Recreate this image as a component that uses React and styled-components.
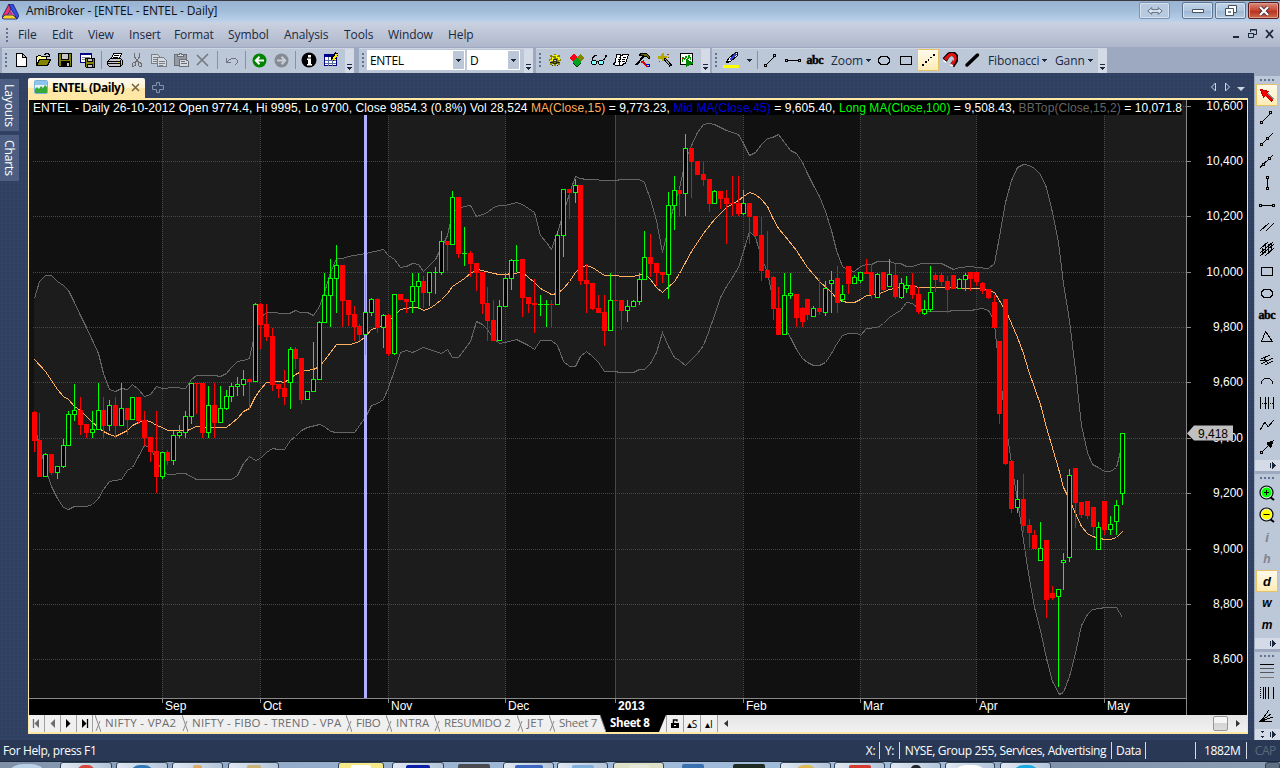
import styled, { createGlobalStyle } from 'styled-components'

const GlobalStyle = createGlobalStyle`
  * {
    box-sizing: border-box;
  }

  body {
    margin: 0;
    overflow: hidden;
    font-family: 'Open Sans', 'Noto Sans', sans-serif;
    font-size: 12px;
    color: #1b293e;
  }

  svg {
    display: block;
    flex: none;
  }
`

const Window = styled.div`
  width: 1280px;
  height: 768px;
  display: flex;
  flex-direction: column;
  overflow: hidden;
  background: #2d3e5e;
`

const TitleBar = styled.header`
  height: 22px;
  flex: none;
  display: flex;
  align-items: center;
  border-top: 1px solid #3a3a40;
  background: linear-gradient(#98b4d2, #a3bedb 50%, #bdd2ea);
  padding: 0 1px 0 2px;
  color: #101010;
`

const TitleText = styled.h1`
  flex: 1;
  margin: 0 0 2px 7px;
  font-size: 12px;
  font-weight: 400;
  letter-spacing: -0.12px;
`

const Caption = styled.button`
  width: 31px;
  height: 17px;
  margin: 0 ${(p) => p.$gap || 0}px 2px 2px;
  padding: 0;
  display: flex;
  align-items: center;
  justify-content: center;
  border: 1px solid ${(p) => (p.$close ? '#5b1d1c' : p.$pale ? '#7f93ae' : '#5f738e')};
  border-radius: 2px;
  box-shadow: inset 0 0 0 1px ${(p) => (p.$close ? '#dd9a8e' : '#d3e1f0')};
  background: ${(p) => {
    if (p.$close) return 'linear-gradient(#d98b7c, #c5442f 50%, #b5301c 52%, #cf6a4c)'
    if (p.$pale) return '#b7cae0'
    return 'linear-gradient(#c0d3e8, #b0c6de 50%, #9db6d2 52%, #b5cbe3)'
  }};
`

const MenuBar = styled.nav`
  height: 25px;
  flex: none;
  display: flex;
  align-items: center;
  padding: 0 6px 0 3px;
  background: linear-gradient(#cbd2e1, #aeb7cb);
`

const MenuItem = styled.span`
  width: ${(p) => p.$w}px;
  padding-left: 7px;
  letter-spacing: -0.1px;
  white-space: nowrap;
`

const MdiButtons = styled.div`
  margin: 0 0 2px auto;
  display: flex;
`

const Toolbars = styled.div`
  height: 26px;
  flex: none;
  display: flex;
  padding: 1px 0 0 2px;
  background: #9ca9c1;
`

const Strip = styled.div`
  display: flex;
  align-items: center;
  height: 25px;
  width: ${(p) => p.$w}px;
  margin-right: ${(p) => p.$gap}px;
  padding-bottom: 2px;
  background: #bcc7d8;
  border-top: 1px solid #cdd5e2;
`

const Grip = styled.i`
  width: ${(p) => (p.$flat ? 15 : 2)}px;
  height: ${(p) => (p.$flat ? 2 : 14)}px;
  margin: ${(p) => (p.$flat ? '3px 0 3px 4px' : '0 3px')};
  flex: none;
  background: repeating-linear-gradient(
    ${(p) => (p.$flat ? '90deg' : '180deg')},
    #5f7294 0 2px,
    transparent 2px 4px
  );
`

const Tool = styled.button`
  width: 22px;
  height: 22px;
  padding: 0;
  flex: none;
  display: flex;
  align-items: center;
  justify-content: center;
  font: inherit;
  color: inherit;
  border: 1px solid ${(p) => (p.$on ? '#e5c365' : 'transparent')};
  background: ${(p) => (p.$on ? 'linear-gradient(#fffaec, #ffecb5)' : 'none')};
`

const Divider = styled.i`
  width: 1px;
  height: 18px;
  margin: 0 2.5px;
  background: #8591a5;
`

const TextTool = styled.span`
  width: ${(p) => p.$w}px;
  padding-left: 5px;
  display: flex;
  align-items: center;
  gap: 3px;
  letter-spacing: -0.1px;
  white-space: nowrap;
`

const Overflow = styled.div`
  width: 9px;
  height: 24px;
  margin: 0 0 -2px auto;
  padding-bottom: 3px;
  display: flex;
  align-items: flex-end;
  justify-content: center;
  background: #d5dbe6;
`

const Combo = styled.div`
  width: ${(p) => p.$w}px;
  height: 20px;
  margin-right: 2px;
  display: flex;
  align-items: center;
  justify-content: space-between;
  padding: 1px 1px 1px 3px;
  background: #fff;
  color: #000;
  letter-spacing: -0.3px;
`

const ComboArrow = styled.span`
  width: 11px;
  height: 18px;
  display: flex;
  align-items: center;
  justify-content: center;
  background: #bcc7d8;
`

const Body = styled.main`
  height: 667px;
  flex: none;
  display: grid;
  grid-template-columns: 28px 1220px 6px 26px;
  background-color: #2f4060;
  background-image: radial-gradient(#374b6f 0.6px, transparent 0.8px);
  background-size: 4px 4px;
`

const SideTabs = styled.div`
  display: flex;
  flex-direction: column;
  gap: 4px;
  padding-top: 6px;
`

const SideTab = styled.div`
  width: 19px;
  height: ${(p) => p.$h}px;
  padding-top: 5px;
  writing-mode: vertical-rl;
  line-height: 19px;
  font-size: 12px;
  letter-spacing: -0.1px;
  color: #fff;
  background: #4c5f82;
`

const Document = styled.section`
  display: flex;
  flex-direction: column;
  padding-top: 5px;
`

const TabRow = styled.div`
  height: 20px;
  display: flex;
  align-items: center;
`

const DocTab = styled.div`
  width: 117px;
  height: 20px;
  display: flex;
  align-items: center;
  padding: 0 5px 2px 6px;
  gap: 4px;
  color: #000;
  font-weight: 700;
  letter-spacing: -0.5px;
  white-space: nowrap;
  border-radius: 2px 2px 0 0;
  background: linear-gradient(#fffaf0, #fff3cf 48%, #ffe8a6 52%);

  svg:last-child {
    margin-left: auto;
  }
`

const TabArrows = styled.div`
  margin: 0 0 2px auto;
  padding-right: 2px;
`

const ChartFrame = styled.div`
  height: 636px;
  border: 1px solid #ffe8a6;
  border-top-width: 2px;
  border-bottom-width: 2px;
  background: #000;
`

const SheetBar = styled.div`
  height: 17px;
  display: flex;
  background: #f0f0f0;
`

const SheetNav = styled.span`
  width: ${(p) => p.$w || 16}px;
  display: flex;
  align-items: center;
  justify-content: center;
  border-right: 1px solid #a0a0a0;
  font-size: 10px;
  color: #000;
`

const Sheet = styled.span`
  width: ${(p) => p.$w}px;
  display: flex;
  align-items: center;
  white-space: nowrap;
  font-size: 11.5px;
  letter-spacing: ${(p) => p.$ls || -0.35}px;
  font-weight: ${(p) => (p.$on ? 700 : 400)};
  color: ${(p) => (p.$on ? '#fff' : '#6d6d6d')};
  background: ${(p) => (p.$on ? '#000' : '#f0f0f0')};
`

const SheetLabel = styled.span`
  padding: 0 0 2px 4px;
`

const Spacer = styled.i`
  width: 2px;
`

const ScrollTrack = styled.div`
  flex: 1;
  display: flex;
  align-items: center;
  justify-content: space-between;
  padding: 0 7px 0 6px;
  background: linear-gradient(#e4e4e4, #f2f2f2);
`

const ScrollEnd = styled.div`
  display: flex;
  align-items: center;
  gap: 8px;
`

const Thumb = styled.i`
  width: 15px;
  height: 15px;
  border: 1px solid #979797;
  border-radius: 2px;
  background: linear-gradient(#f5f5f5 45%, #d4d4d4 50%, #dcdcdc);
`

const Rail = styled.aside`
  display: flex;
  flex-direction: column;
  padding-top: 3px;
  background: #9ca9c1;
`

const RailStrip = styled.div`
  height: ${(p) => p.$h}px;
  margin: 0 0 3px 1px;
  padding-left: 1px;
  display: flex;
  flex-direction: column;
  align-items: flex-start;
  background: #bcc7d8;
`

const RailOverflow = styled.div`
  align-self: stretch;
  height: 11px;
  margin: auto 0 0 -1px;
  padding-right: 4px;
  display: flex;
  align-items: center;
  justify-content: flex-end;
  gap: 6px;
  background: #d5dbe6;
`

const StatusBar = styled.footer`
  height: 21px;
  flex: none;
  display: flex;
  align-items: center;
  padding: 0 4px 0 3px;
  background: #293955;
  color: #fff;
  letter-spacing: -0.38px;
`

const StatusCell = styled.span`
  width: ${(p) => p.$w}px;
  height: 17px;
  line-height: 17px;
  text-align: ${(p) => p.$align || 'center'};
  white-space: nowrap;
  border-right: ${(p) => (p.$last ? 'none' : '1px solid #d5dbe6')};
  color: ${(p) => (p.$last ? '#5c6879' : '#fff')};
  letter-spacing: -0.35px;
`

const Spring = styled.span`
  flex: 1;
`

const Taskbar = styled.div`
  height: 7px;
  flex: none;
  display: flex;
  overflow: hidden;
  border-top: 1px solid #1d2939;
  background: linear-gradient(90deg, #7f90a6, #8ea5c2 12%, #a0bbda 45%, #a0bbda 75%, #8093ab 82%, #8a9db3);
`

const TaskSlot = styled.span`
  width: ${(p) => p.$w}px;
  height: 20px;
  margin-left: ${(p) => p.$gap}px;
  padding-top: 2px;
  flex: none;
  display: flex;
  justify-content: center;
  border-radius: 3px;
  border: ${(p) => (p.$bg ? '1px solid #32435a' : 'none')};
  background: ${(p) => p.$bg || 'none'};
`

const TaskIcon = styled.i`
  width: ${(p) => p.$w}px;
  height: 20px;
  border-radius: ${(p) => (p.$round ? '40%' : '2px')};
  background: ${(p) => p.$c};
`

/* ---------- icons ---------- */

function Icon({ size = 16, children, crisp = true }) {
  return (
    <svg
      width={size}
      height={size}
      viewBox='0 0 16 16'
      fill='none'
      stroke='#000'
      shapeRendering={crisp ? 'crispEdges' : 'auto'}
    >
      {children}
    </svg>
  )
}

const LogoIcon = () => (
  <svg width='17' height='16' viewBox='0 0 17 16'>
    <path d='M7 0L1 11l-1 3h4l5-9z' fill='#e8356a' stroke='#1d1a60' strokeWidth='0.8' />
    <path d='M7 0h4l6 12-2 3-6-10z' fill='#2f50e0' stroke='#1d1a60' strokeWidth='0.8' />
    <path d='M0 14l3-3h8l4 4H2z' fill='#f5d327' stroke='#1d1a60' strokeWidth='0.8' />
    <path d='M8.500 6l-2 5h5z' fill='#c6358a' />
  </svg>
)

const Caret = () => (
  <svg width='5' height='3' viewBox='0 0 5 3' shapeRendering='crispEdges'>
    <path d='M0 0h5v1H4v1H3v1H2V2H1V1H0z' fill='#1b293e' />
  </svg>
)

const OverflowMark = () => (
  <svg width='5' height='6' viewBox='0 0 5 6' shapeRendering='crispEdges'>
    <path d='M0 0h5v1H0zM0 3h5v1H4v1H3v1H2V5H1V4H0z' fill='#1b293e' />
  </svg>
)

const RailMark = () => (
  <svg width='6' height='7' viewBox='0 0 6 7' shapeRendering='crispEdges'>
    <path d='M0 1h1v5H0zM2 0h1v1h1v1h1v1h1v1H5v1H4v1H3v1H2z' fill='#1b293e' />
  </svg>
)

const MoreMark = () => (
  <svg width='3' height='7' viewBox='0 0 3 7' shapeRendering='crispEdges'>
    <path d='M0 0h3v1H2v1H1V1H0zM0 5h3v1H2v1H1V6H0z' fill='#1b293e' />
  </svg>
)

const NewIcon = () => (
  <Icon>
    <path d='M3.5 1.5h6l4 4v9h-10zM9.5 1.5v4h4' fill='#fff' />
  </Icon>
)

const OpenIcon = () => (
  <Icon>
    <path d='M1.5 13.5v-9h1l1-1h2l1 1h5v3' fill='#ffff99' />
    <path d='M1.5 13.5l3-6h11l-3 6z' fill='#848400' />
    <path d='M9 2.5h1l1-1h2l1 1v2M12 4.5h3' />
  </Icon>
)

const SaveIcon = () => (
  <Icon>
    <path d='M1.5 1.5h13v13h-12l-1-1z' fill='#848400' />
    <path d='M4.5 1.5h7v6h-7z' fill='#c6c6c6' />
    <path d='M4.5 9.5h8v5h-8z' fill='#000' />
    <path d='M10 11h2v3h-2z' fill='#c6c6c6' stroke='none' />
  </Icon>
)

const SaveAllIcon = () => (
  <Icon>
    <path d='M1.5 1.5h11v9h-11z' fill='#fff' stroke='#000084' />
    <path d='M1 2h12' stroke='#000084' strokeWidth='2' />
    <path d='M3 5h8M3 7h3' stroke='#848484' />
    <path d='M6.5 6.5h9v9h-8l-1-1z' fill='#848400' />
    <path d='M8.5 6.5h5v3h-5zM8.5 12.5h5v3h-5z' fill='#c6c6c6' />
  </Icon>
)

const PrintIcon = () => (
  <Icon>
    <path d='M4.5 6.5l2-5h8l-2 5z' fill='#fff' />
    <path d='M7 3.5h5M6 5.5h5' />
    <path d='M.5 9.5l3-3h10l2 2v4l-2 2H2.5l-2-2z' fill='#c6c6c6' />
    <path d='M1 9.5h12v4M1 11.5h12M13 9l2-2M5 14.5h8' />
    <path d='M10 10.5h2' stroke='#e5e500' />
  </Icon>
)

const CutIcon = () => (
  <Icon>
    <path d='M5.5 1v4l4 5M10.5 1v4l-4 5' stroke='#6d6d6d' />
    <path d='M4.5 10.5h2v3h-1l-1 1h-1v-3zM9.5 10.5h1l2 1v3h-2l-1-1z' stroke='#6d6d6d' />
  </Icon>
)

const CopyIcon = () => (
  <Icon>
    <path d='M.5 2.5h6l3 3v6h-9z' fill='#d5d9e0' stroke='#7b7f88' />
    <path d='M6.5 5.5h6l3 3v6h-9z' fill='#d5d9e0' stroke='#7b7f88' />
    <path d='M2 5.5h4M2 7.5h4M2 9.5h4M8 9.5h6M8 11.5h6M8 13h4' stroke='#7b7f88' />
  </Icon>
)

const PasteIcon = () => (
  <Icon>
    <path d='M1.5 2.5h12v11h-12z' fill='#959aa3' stroke='#6b6f78' />
    <path d='M4.5 4.5v-2h2v-1h2v1h2v2z' fill='#d5d9e0' stroke='#6b6f78' />
    <path d='M6.5 7.5h6l3 2v5h-9z' fill='#d5d9e0' stroke='#6b6f78' />
    <path d='M8 9.5h4M8 11.5h6' stroke='#6b6f78' />
  </Icon>
)

const DeleteIcon = () => (
  <Icon crisp={false}>
    <path d='M2 3l11 11M13 2L2 13' stroke='#74787f' strokeWidth='1.6' />
  </Icon>
)

const UndoIcon = () => (
  <Icon>
    <path d='M3.5 6v4.5H8M4 10l3-3h1l1-1h3l2 2v3l-2 2' stroke='#6d727c' />
  </Icon>
)

const BackIcon = ({ color, flip }) => (
  <svg width='15' height='15' viewBox='0 0 15 15'>
    <circle cx='7.5' cy='7.5' r='7' fill={color} />
    <path
      d='M12 7.5H4M7.5 3.8L3.8 7.5l3.7 3.7'
      fill='none'
      stroke={flip ? '#c8ced8' : '#fff'}
      strokeWidth='2'
      transform={flip ? 'rotate(180 7.5 7.5)' : undefined}
    />
  </svg>
)

const InfoIcon = () => (
  <svg width='16' height='16' viewBox='0 0 16 16'>
    <circle cx='8' cy='8' r='7.5' fill='#000' />
    <path d='M7 3h3v2.5H7zM6 6.5h4V12h1v1.5H6V12h1V8H6z' fill='#fff' />
  </svg>
)

const TableIcon = () => (
  <Icon>
    <path d='M1.5 2.5h12v11h-12z' fill='#fff' stroke='#000084' />
    <path d='M1 3.5h13' stroke='#000084' strokeWidth='3' />
    <path d='M2 8h11M2 11h11M5.5 5v9M9.5 5v9' stroke='#5a6ea0' />
    <path d='M14 1l-5 7' stroke='#000' strokeWidth='4' />
    <path d='M14 2l-4 6' stroke='#ffe600' strokeWidth='2' />
  </Icon>
)

const GearIcon = () => (
  <Icon>
    <path
      d='M7 2h2v2h2V3h2v2h-1v2h2v2h-2v2h1v2h-2v-1H9v2H7v-2H5v1H3v-2h1V9H2V7h2V5H3V3h2v1h2z'
      fill='#848400'
      stroke='none'
    />
    <path d='M7 3h2v2h2v2h2M3 8h2V6h2M5 5v1' stroke='#ffff00' />
    <path d='M6.500 7.500h3v2h-3z' fill='#bcc7d8' stroke='#333' />
    <path d='M3 10.500h3l1 1h2l1-1h3M5 13.500h1M10 13.500h1' stroke='#2a2a00' />
  </Icon>
)

const CubesIcon = () => (
  <Icon>
    <path d='M1 5l4-3 3 3v3l-3 2-4-3z' fill='#ff0019' stroke='none' />
    <path d='M8 5l3-3 4 3v2l-4 3-3-2z' fill='#848400' stroke='none' />
    <path d='M4 9l4-3 4 3v1l-4 4-4-3z' fill='#00a020' stroke='none' />
    <path d='M4 11l4 4 4-4' stroke='#004010' />
  </Icon>
)

const GlassesIcon = () => (
  <Icon>
    <path d='M1 9h4v4H1zM8 9h4v4H8z' fill='#80ffff' stroke='none' />
    <path d='M1 8.500h4M1 12.500h4M.500 9v3M5.500 9v3M8 8.500h4M8 12.500h4M7.500 9v3M12.500 9v3M6 9.500h2' />
    <path d='M1.500 8V6l3-3h1M12 7.500h1l2-3V3.500h-1' />
  </Icon>
)

const ScrollIcon = () => (
  <Icon>
    <path d='M3.500 2.500h4l1 1 2-1h5l-3 9h-2l-1 2h-6l-3-1 1-2h1z' fill='#fff' />
    <path d='M7 5.500H6m-1 2h3M5 9.500h3M10 5.500h3M9 7.500h3M9 9.500h3M8 3.500l-2 9' />
  </Icon>
)

const HammerIcon = () => (
  <Icon>
    <path d='M4 3l3-2h4l4 4-1 2-3-3H9z' fill='#6b6200' />
    <path d='M9 4L1 13' strokeWidth='2' />
    <path d='M6 10.500l2-1 2 3 2 2' stroke='#e00000' strokeWidth='2' />
    <path d='M11 12h3l1 2-3 1' stroke='#0000d0' />
  </Icon>
)

const WandIcon = () => (
  <Icon>
    <path d='M7 6l7 8' strokeWidth='3' />
    <path d='M8 7l5 6' stroke='#9a9a9a' />
    <path d='M5 1h2v3h3v2H7v3H5V7H1V4h3z' fill='#b5a900' stroke='none' />
    <path d='M10 2h2M2 9h1M11 5h1' stroke='#a04000' />
  </Icon>
)

const RunIcon = () => (
  <Icon>
    <path d='M1.500 1.500h12v11h-12z' fill='#fff' />
    <path d='M3 9.500l1-4 2 2 1-3 2 3 1-4 2 4' stroke='#00a000' />
    <path d='M3 6l2 1' stroke='#e00000' />
    <path d='M7 7l8 4-8 4z' fill='#008400' stroke='none' />
  </Icon>
)

const PenIcon = () => (
  <Icon>
    <path d='M12.500.500h2v3l-7 6-4 1 2-4z' fill='#fff' />
    <path d='M13 2L7 8' stroke='#2840d0' strokeWidth='2' />
    <path d='M0 13h16v3H0z' fill='#ffff00' stroke='none' />
  </Icon>
)

const MagnetIcon = () => (
  <Icon crisp={false}>
    <path d='M2.500 8l4-4.500c4-4 9 0 7 5L10 14' stroke='#000' strokeWidth='5' />
    <path d='M3 7.600l3.800-4c3.500-3 7.500 0 6 4.500L10 13' stroke='#e01212' strokeWidth='3.200' />
    <path d='M6.500 8l1.500-2c2-2 4 0 3 2.500' stroke='#bcc7d8' strokeWidth='1.500' />
    <path d='M1.500 8.500l2.500 2M8 12.500l3 1.500' stroke='#fff' strokeWidth='1.500' />
  </Icon>
)

const node = (x, y) => <path d={`M${x} ${y}h2v2h-2z`} />

const TrendIcon = () => (
  <Icon>
    <path d='M3 13L13 3' />
    <g fill='#bcc7d8'>
      {node(1.5, 12.5)}
      {node(10.500, 2.500)}
    </g>
  </Icon>
)

const RayIcon = () => (
  <Icon>
    <path d='M2 14L14 2' />
    <g fill='#bcc7d8'>
      {node(1.5, 12.5)}
      {node(7.5, 6.500)}
    </g>
  </Icon>
)

const ExtendedIcon = () => (
  <Icon>
    <path d='M1 14.500L14 2' />
    <g fill='#bcc7d8'>
      {node(3.5, 10.500)}
      {node(9.5, 4.500)}
    </g>
  </Icon>
)

const VerticalIcon = () => (
  <Icon>
    <path d='M8.500 2v12' />
    <g fill='#bcc7d8'>
      {node(7.5, 1.5)}
      {node(7.5, 12.5)}
    </g>
  </Icon>
)

const HorizontalIcon = () => (
  <Icon>
    <path d='M1 8.500h14' />
    <g fill='#bcc7d8'>
      {node(0.5, 7.5)}
      {node(13, 7.5)}
    </g>
  </Icon>
)

const ParallelIcon = () => (
  <Icon>
    <path d='M1 12l9-8M7 12l8-8' />
  </Icon>
)

const RegressionIcon = () => (
  <Icon>
    <path d='M1 8l8-7M1 12L14 1M1 15L15 3M6 15l9-8M3.500 7v7M6.500 4v8M9.500 3v9M12.500 2v8' />
  </Icon>
)

const RectIcon = () => (
  <Icon>
    <path d='M2.500 4.500h11v8h-11z' />
  </Icon>
)

const EllipseIcon = () => (
  <Icon>
    <path d='M5.500 4.500h5l2 1 1 2v2l-1 2-2 1h-5l-2-1-1-2v-2l1-2z' />
  </Icon>
)

const AbcIcon = () => (
  <svg width='18' height='16' viewBox='0 0 18 16'>
    <text
      x='0.500'
      y='12'
      fontFamily='Liberation Serif, serif'
      fontWeight='700'
      fontSize='12'
      textLength='17'
      stroke='#000'
      strokeWidth='0.4'
    >
      abc
    </text>
  </svg>
)

const TriangleIcon = () => (
  <Icon>
    <path d='M6.500 2.500l7 10h-11z' />
  </Icon>
)

const PitchforkIcon = () => (
  <Icon>
    <path d='M2 8l9-4M2 13l12-6M6 14l8-4M4 6l5 6M1 9h7' />
  </Icon>
)

const ArcIcon = () => (
  <Icon>
    <path d='M2.500 11V8.500l3-3h5l3 3V11' />
  </Icon>
)

const CyclesIcon = () => (
  <Icon>
    <path d='M1.500 2v12M6.500 2v12M9.500 2v12M14.500 2v12' />
    <path d='M3 8.500h11' strokeDasharray='1 1' />
  </Icon>
)

const ZigzagIcon = () => (
  <Icon>
    <path d='M1 13l5-8 3 5 6-7' />
  </Icon>
)

const ArrowIcon = () => (
  <Icon>
    <path d='M3 13l7-7' />
    <path d='M8 4l6-2-2 6h-1L8 5z' fill='#000' />
    <path d='M1.500 12.500h2v2h-2z' fill='#bcc7d8' />
  </Icon>
)

const PointerIcon = () => (
  <Icon>
    <path d='M5 4l9 9' stroke='#8a8a8a' strokeWidth='3' />
    <path d='M1.500 2.500l8 2-2 2 6 6-1 2-6-6-2 2z' fill='#ff0000' stroke='#c00000' />
  </Icon>
)

const DotLineIcon = () => (
  <Icon>
    <path d='M2 12h2v2H2zM5 9h2v2H5zM8 7h1v2H8zM10 5h2v1h-2zM13 2h2v2h-2z' fill='#000' stroke='none' />
  </Icon>
)

const ThickLineIcon = () => (
  <Icon crisp={false}>
    <path d='M3 13L13.500 3' strokeWidth='3.500' strokeLinecap='round' />
  </Icon>
)

const ZoomIcon = ({ color, plus }) => (
  <Icon crisp={false}>
    <path d='M11 12l4 3' strokeWidth='2' />
    <circle cx='7.500' cy='7.500' r='6.500' fill='#e8ecf2' strokeWidth='1.200' />
    <circle cx='7.500' cy='7.500' r='5' fill={color} stroke='none' />
    <path d={plus ? 'M5 7.500h5M7.500 5v5' : 'M4.500 7.500h6'} />
  </Icon>
)

const Interval = styled.span`
  font-family: 'Liberation Sans', Arial, sans-serif;
  font-style: italic;
  font-weight: 900;
  font-size: ${(p) => (p.$small ? 12 : 13)}px;
  color: ${(p) => (p.$off ? '#7d838e' : '#000')};
`

const LevelsIcon = () => (
  <Icon>
    <path d='M1 1.500h14' />
    <path d='M1 5.500h14M1 9.500h14' stroke='#555' />
    <path d='M1 14.500h14' stroke='#777' />
  </Icon>
)

const ZonesIcon = () => (
  <Icon>
    <path d='M1.500 2v12' strokeDasharray='1 1' />
    <path d='M4.500 2v12M6.500 2v12M9.500 2v12M14.500 2v12' />
  </Icon>
)

const FanIcon = () => (
  <Icon>
    <path d='M2 14L10 3M2 14l10-7M2 14l12-4M2 14h11' />
    <path d='M1 14l5-3-1 3z' fill='#000' />
  </Icon>
)

/* ---------- chart data ---------- */

const FIRST_BAR = 34
const BAR_STEP = 5.819

// direction, high, body top, body bottom, low
const CANDLES = `
r 411 412 441 452|r 413 440 477 477|g 453 454 477 477|r 454 454 473 475|g 466 466 473 479|g 439 445 467 468|g 411 414 446 446|g 384 410 415 421
r 397 410 425 435|r 424 424 433 438|g 411 429 433 438|g 383 410 430 430|r 397 410 426 438|g 400 405 426 431|r 397 405 426 438|g 383 408 426 426
r 408 408 420 435|g 397 397 420 420|r 397 397 421 424|r 411 420 438 446|r 437 437 452 462|r 411 451 477 493|g 452 452 477 479|r 450 452 461 465
g 431 435 461 465|g 425 432 436 438|g 411 416 433 438|g 383 383 417 424|r 383 383 384 414|r 383 383 433 438|g 386 405 433 438|r 383 405 423 438
g 386 408 423 423|g 390 396 409 410|g 383 386 397 402|g 377 384 387 396|g 370 379 385 396|r 379 379 382 410|g 303 304 382 382|r 303 304 325 349
r 304 324 337 341|r 328 336 385 391|r 384 384 389 398|r 370 388 397 405|g 347 349 383 409|r 347 349 359 369|r 358 358 400 404|g 391 391 400 400
g 342 379 392 392|g 321 322 380 380|g 273 295 323 323|g 259 278 296 327|g 245 265 279 313|r 265 265 301 327|r 300 300 315 326|r 306 314 327 341
r 324 326 335 341|g 274 312 335 355|g 298 299 313 316|r 298 299 328 333|g 314 315 328 348|r 314 315 354 356|g 294 294 354 355|r 294 294 300 300
r 299 299 302 313|g 273 286 302 313|g 273 281 287 309|r 276 281 293 308|g 272 272 293 306|g 267 272 273 294|g 231 241 273 275|r 241 241 245 271
g 191 197 245 245|r 197 197 254 258|g 227 253 254 266|r 251 253 264 277|r 263 263 273 291|r 272 272 304 314|r 287 303 321 341|r 300 320 341 341
g 300 306 341 341|g 273 278 307 307|g 259 260 279 290|g 245 260 261 272|r 259 259 298 317|r 297 297 304 313|r 279 303 305 333|g 295 304 305 316
g 300 304 305 327|r 300 304 305 327|g 231 235 305 305|g 189 189 236 257|r 189 189 193 219|g 179 185 193 203|r 185 185 281 285|r 264 280 284 313
r 283 283 309 310|r 295 308 313 313|r 295 312 331 346|g 273 300 331 331|r 284 300 301 312|r 300 300 311 330|g 300 306 311 322|g 300 301 307 307
g 273 279 302 305|g 231 257 280 280|r 234 257 264 277|r 263 263 273 286|r 272 272 275 283|g 192 205 275 299|g 176 190 206 230|r 189 190 194 216
g 134 148 194 216|r 148 148 162 198|r 161 161 175 175|r 162 174 180 186|r 179 179 204 212|g 190 191 204 204|r 191 191 199 209|r 190 198 204 244
r 176 203 204 216|r 176 203 214 216|g 190 203 214 215|r 203 203 217 244|r 216 216 236 238|r 217 235 271 281|r 231 270 278 278|r 276 277 309 320
r 287 308 335 335|g 273 295 335 335|g 273 293 296 299|r 294 294 318 327|r 307 308 322 327|r 299 299 315 320|g 306 308 317 317|r 278 308 312 315
g 281 288 313 316|g 271 280 284 313|r 266 278 303 313|g 285 294 300 302|r 266 266 284 294|g 275 277 284 284|g 272 272 281 283|r 259 272 274 274
r 264 272 295 299|g 273 274 298 298|r 272 272 290 293|g 259 274 287 287|r 264 275 297 299|g 278 283 298 299|g 276 285 289 293|r 273 285 295 299
r 287 294 312 314|g 300 309 314 315|g 266 292 310 312|r 273 275 280 292|r 273 275 282 286|r 276 281 290 313|r 275 275 289 289|g 278 279 289 289
g 273 275 280 291|r 272 272 279 291|r 272 272 282 286|r 282 283 291 294|r 289 289 298 299|r 295 302 328 328|r 341 341 414 424|r 299 299 464 465
r 461 461 509 513|g 480 499 508 513|r 474 499 526 532|r 519 525 533 548|r 530 535 549 549|g 522 548 561 561|r 540 540 600 618|r 586 593 598 600
g 589 589 597 687|g 553 560 563 590|g 469 475 558 562|r 468 468 503 528|r 502 502 515 518|r 501 501 516 519|r 507 507 527 535|g 522 527 550 550
r 501 501 530 535|g 516 524 530 535|g 500 505 522 535|g 433 433 494 505`
  .trim()
  .split(/[|\n]/)
  .map((row, i) => {
    const [dir, ...ys] = row.split(' ')
    const [high, top, bottom, low] = ys.map(Number)
    return { x: Math.floor(FIRST_BAR + i * BAR_STEP), up: dir === 'g', high, top, bottom, low }
  })

const UPPER_BAND =
  '34,298 39,281 45,275 51,275 57,281 63,285 68,290 74,302 80,315 86,327 92,340 98,353 103,373 109,389 115,391 121,388 127,389 132,384 138,389 144,396 150,394 156,386 162,388 173,387 185,388 191,379 196,375 214,375 220,376 226,373 231,367 237,361 243,360 249,358 255,330 260,317 266,312 289,313 295,310 300,312 307,312 313,315 319,306 324,292 330,272 336,258 342,258 348,256 365,253 383,249 388,255 394,259 400,267 406,266 412,263 418,264 423,271 435,259 441,247 447,235 452,212 458,208 464,206 470,205 476,216 482,214 487,212 493,207 499,205 505,205 516,202 522,204 528,208 534,212 540,235 546,242 551,249 557,232 563,213 569,193 575,176 580,178 586,179 592,179 604,180 615,180 621,179 639,179 644,182 650,199 656,220 662,252 668,227 674,203 679,188 685,160 691,145 697,132 703,124 708,123 714,124 726,130 732,132 738,134 743,143 749,155 755,152 761,144 767,138 772,137 778,134 784,142 790,150 796,153 802,162 807,173 813,185 819,196 825,211 831,230 836,250 842,266 848,270 854,271 860,266 866,264 871,264 877,261 889,261 895,263 900,263 906,266 912,266 921,263 941,263 953,269 959,267 970,266 976,267 988,268 994,263 999,236 1005,202 1011,180 1017,167 1023,164 1029,165 1034,168 1040,174 1046,187 1052,212 1058,242 1063,283 1069,320 1075,370 1081,425 1087,452 1092,464 1098,467 1104,471 1110,471 1116,467 1119,455 1122,440'

const LOWER_BAND =
  '34,425 39,445 45,468 51,486 57,498 63,507 68,509 74,506 86,506 92,504 98,498 103,489 109,481 121,479 127,470 132,467 138,456 144,445 150,447 156,460 162,470 167,474 185,473 196,479 231,479 237,475 243,463 249,456 255,460 260,458 266,452 272,448 278,449 284,449 290,440 295,436 301,430 307,427 319,424 324,426 330,431 336,432 354,432 365,417 371,405 377,403 383,399 388,387 394,370 400,352 406,350 412,352 423,347 441,353 447,349 452,357 458,357 464,349 470,341 476,321 482,324 487,329 493,338 499,343 505,342 516,339 528,345 534,349 540,340 551,340 557,345 563,361 569,366 575,366 580,356 586,351 592,356 598,362 604,371 615,371 619,372 633,372 639,369 644,369 650,363 656,352 662,332 668,346 674,357 679,360 685,365 697,353 703,345 708,332 714,315 720,297 726,286 732,277 738,267 743,251 749,231 755,237 761,257 767,272 772,297 778,317 784,327 790,337 796,349 802,358 807,362 813,365 819,365 825,362 831,353 836,344 842,335 848,333 857,333 860,335 866,328 877,327 883,323 889,317 895,313 900,310 906,302 912,303 918,308 924,311 947,311 953,310 970,310 982,308 988,310 992,317 994,323 996,343 999,370 1005,420 1011,463 1017,500 1023,540 1028,573 1034,607 1040,630 1046,658 1052,681 1059,694 1063,692 1069,676 1075,653 1081,625 1087,614 1092,609 1100,608 1104,607 1116,607 1119,612 1122,617'

const MOVING_AVERAGE =
  '34,359 45,371 57,389 63,396 68,399 74,406 80,410 86,416 92,422 103,431 109,434 115,436 121,433 127,430 132,425 138,422 144,420 150,421 156,425 162,427 167,430 187,430 196,426 211,427 226,427 237,418 243,411 249,408 255,396 260,389 266,382 278,381 284,382 295,374 301,371 313,369 319,366 324,360 336,344 350,344 359,341 365,336 371,329 377,327 383,325 394,315 400,309 412,307 418,307 423,310 429,308 435,304 441,299 447,293 452,286 464,278 470,273 476,269 482,270 493,273 499,274 505,274 511,273 522,272 528,277 534,282 540,288 551,294 557,293 563,288 569,281 575,272 580,267 586,265 592,267 604,275 633,276 644,273 650,279 656,287 662,292 674,281 679,273 691,251 703,233 714,219 726,207 738,200 743,196 749,192 755,194 761,199 767,206 772,217 778,228 784,235 796,250 807,267 819,281 831,292 836,298 842,301 848,302 854,302 860,299 866,295 877,294 889,289 900,287 906,285 912,285 918,287 947,287 965,288 982,288 994,292 1002,305 1008,316 1017,337 1023,353 1028,370 1040,404 1046,427 1058,468 1063,487 1068,497 1075,513 1081,526 1087,533 1092,536 1104,539 1110,539 1116,537 1122,531'

const PRICES = [
  ['10,600', 106],
  ['10,400', 161],
  ['10,200', 216],
  ['10,000', 272],
  ['9,800', 327],
  ['9,600', 382],
  ['9,400', 438],
  ['9,200', 493],
  ['9,000', 549],
  ['8,800', 604],
  ['8,600', 659],
]

const MONTHS = [
  ['Sep', 162],
  ['Oct', 260],
  ['Nov', 388],
  ['Dec', 505],
  ['2013', 615],
  ['Feb', 743],
  ['Mar', 860],
  ['Apr', 976],
  ['May', 1104],
]

const DARK_SPANS = [
  [29, 162],
  [260, 388],
  [505, 615],
  [743, 860],
  [976, 1104],
]

function Chart() {
  const band = `${UPPER_BAND} ${LOWER_BAND.split(' ').reverse().join(' ')}`

  return (
    <svg
      width='1218'
      height='615'
      viewBox='29 100 1218 615'
      fontFamily='Liberation Sans, Arial, sans-serif'
      fontSize='12'
    >
      <g shapeRendering='crispEdges'>
        <rect x='29' y='100' width='1157' height='598' fill='#1c1c1c' />
        {DARK_SPANS.map(([from, to]) => (
          <rect key={from} x={from} y='100' width={to - from} height='598' fill='#111' />
        ))}
        <polygon points={band} fill='#1c1c1c' />
        {PRICES.map(([label, y]) => (
          <path key={label} d={`M33 ${y + 0.5}H1186`} stroke='#484848' strokeDasharray='1 1' />
        ))}
        {MONTHS.map(([label, x]) => (
          <path
            key={label}
            d={`M${x + 0.5} 115V698`}
            stroke='#484848'
            strokeDasharray={label === '2013' ? undefined : '1 1'}
          />
        ))}
        <g fill='none' transform='translate(.5 .5)'>
          <polyline points={UPPER_BAND} stroke='#666' />
          <polyline points={LOWER_BAND} stroke='#666' />
          <polyline points={MOVING_AVERAGE} stroke='#ffb060' />
        </g>
        <rect x='364' y='115' width='3' height='583' fill='#b0b0ff' />
        {CANDLES.map((c) => {
          const color = c.up ? '#00ff00' : '#ff0000'
          const height = Math.max(c.bottom - c.top, 1)
          return (
            <g key={c.x} fill={color}>
              <rect x={c.x} y={c.high} width='1' height={Math.max(c.low - c.high, 1)} />
              <rect x={c.x - 2} y={c.top} width='5' height={height} />
              {c.up && height > 2 && (
                <rect x={c.x - 1} y={c.top + 1} width='3' height={height - 2} fill='#000' />
              )}
            </g>
          )
        })}
        <path d='M29 698.500H1186M1186.500 100V715' stroke='#888' />
        {PRICES.map(([label, y]) => (
          <path key={label} d={`M1187 ${y + 0.5}h4`} stroke='#888' />
        ))}
        {MONTHS.map(([label, x]) => (
          <path key={label} d={`M${x + 0.5} 699v4`} stroke='#888' />
        ))}
        <rect x='33' y='101' width='1149' height='14' fill='#000' />
      </g>

      <text x='33' y='112' fill='#fff' textLength='1149' xmlSpace='preserve'>
        {'ENTEL - Daily 26-10-2012 Open 9774.4, Hi 9995, Lo 9700, Close 9854.3 (0.8%) Vol 28,524 '}
        <tspan fill='#ffb060'>MA(Close,15)</tspan>
        {' = 9,773.23, '}
        <tspan fill='#0000e0'>Mid MA(Close,45)</tspan>
        {' = 9,605.40, '}
        <tspan fill='#00ff00'>Long MA(Close,100)</tspan>
        {' = 9,508.43, '}
        <tspan fill='#666'>BBTop(Close,15,2)</tspan>
        {' = 10,071.8'}
      </text>

      <g fill='#fff'>
        {PRICES.map(([label, y]) => (
          <text key={label} x='1243' y={y + 4} textAnchor='end'>
            {label}
          </text>
        ))}
        {MONTHS.map(([label, x]) => (
          <text key={label} x={x + 3} y='710' fontWeight={label === '2013' ? 700 : 400}>
            {label}
          </text>
        ))}
      </g>
      <path d='M1187 433.500l7-8h39v15h-39z' fill='#c0c0c0' />
      <text x='1198' y='438' fill='#000'>
        9,418
      </text>
    </svg>
  )
}

/* ---------- layout data ---------- */

const MENU = [
  ['File', 34],
  ['Edit', 36],
  ['View', 41],
  ['Insert', 45],
  ['Format', 54],
  ['Symbol', 56],
  ['Analysis', 60],
  ['Tools', 44],
  ['Window', 60],
  ['Help', 40],
]

// label, width, letter spacing
const SHEETS = [
  ['NIFTY - VPA2', 87, 0.3],
  ['NIFTY - FIBO - TREND - VPA', 164, 0.25],
  ['FIBO', 40, -0.3],
  ['INTRA', 48, 0.15],
  ['RESUMIDO 2', 83, -0.2],
  ['JET', 32, 0.2],
  ['Sheet 7', 51, -0.25],
]

const DRAW_TOOLS = [
  TrendIcon,
  RayIcon,
  ExtendedIcon,
  VerticalIcon,
  HorizontalIcon,
  ParallelIcon,
  RegressionIcon,
  RectIcon,
  EllipseIcon,
  AbcIcon,
  TriangleIcon,
  PitchforkIcon,
  ArcIcon,
  CyclesIcon,
  ZigzagIcon,
  ArrowIcon,
]

const GLASS = 'linear-gradient(90deg, #dfe7f1, #b3c5da)'

// gap, width, background, icon color, icon width, round
const TASKS = [
  [8, 38, null, '#b9d0e6', 34, true],
  [14, 52, GLASS, '#d9453c', 18, true],
  [4, 52, GLASS, '#2f78b5', 22, true],
  [4, 51, GLASS, '#e0a860', 9, false],
  [5, 51, GLASS, '#cbb275', 14, false],
  [59, 46, '#f5e98a', '#fff', 20, false],
  [8, 52, GLASS, '#0a1ea8', 24, false],
  [4, 52, null, '#4b4b4f', 32, false],
  [3, 51, GLASS, '#3a66c2', 28, false],
  [3, 51, GLASS, '#7fb0dd', 22, false],
  [5, 51, '#dfe0c8', '#e8e8d8', 20, false],
  [18, 22, null, '#3a70b0', 22, false],
  [29, 32, null, '#1e2b22', 32, false],
  [15, 51, GLASS, '#e0b850', 20, true],
  [3, 51, GLASS, '#d43a30', 22, false],
  [5, 51, GLASS, '#22262c', 12, true],
  [4, 50, GLASS, '#fff', 30, true],
  [5, 51, GLASS, '#17a9e0', 24, true],
]

const Slant = ({ left, right }) => (
  <svg width='6' height='17' viewBox='0 0 6 17'>
    <path d='M0 0L6 17H0z' fill={left} />
    <path d='M0 0h6v17z' fill={right} />
    <path d='M0 0l6 17' stroke='#8a8a8a' fill='none' />
    {right === '#f0f0f0' && <path d='M5 6L1 16' stroke='#8a8a8a' />}
  </svg>
)

const NavMark = ({ flip, end, color = '#000' }) => (
  <svg width='9' height='9' viewBox='0 0 9 9' transform={flip ? 'scale(-1 1)' : undefined}>
    <path d='M2 0l4.500 4.500L2 9z' fill={color} />
    {end && <path d='M7.500 0v9' stroke={color} strokeWidth='1.300' />}
  </svg>
)

function App() {
  return (
    <Window>
      <GlobalStyle />
      <TitleBar>
        <LogoIcon />
        <TitleText>AmiBroker - [ENTEL - ENTEL - Daily]</TitleText>
        <Caption $gap={10} $pale>
          <svg width='16' height='8' viewBox='0 0 16 8'>
            <path d='M.800 4l4-3.400v2h6.400v-2l4 3.400-4 3.400v-2H4.800v2z' fill='#dfe9f4' stroke='#5f6e82' />
          </svg>
        </Caption>
        <Caption>
          <svg width='12' height='6' viewBox='0 0 12 6'>
            <path d='M.500 1.500h11v3H.500z' fill='#fff' stroke='#45505f' />
          </svg>
        </Caption>
        <Caption>
          <svg width='12' height='12' viewBox='0 0 12 12'>
            <path d='M3.500.500h8v7h-8z' fill='#fff' stroke='#45505f' />
            <path d='M.500 3.500h8v7h-8z' fill='#fff' stroke='#45505f' />
            <path d='M3 6h3v2H3z' fill='#7f93ab' />
          </svg>
        </Caption>
        <Caption $close>
          <svg width='12' height='10' viewBox='0 0 12 10'>
            <path d='M2 1l8 8M10 1L2 9' stroke='#4a2c38' strokeWidth='4' />
            <path d='M2 1l8 8M10 1L2 9' stroke='#fff' strokeWidth='2.200' />
          </svg>
        </Caption>
      </TitleBar>

      <MenuBar>
        <Grip />
        {MENU.map(([label, w]) => (
          <MenuItem key={label} $w={w}>
            {label}
          </MenuItem>
        ))}
        <MdiButtons>
          <svg width='42' height='10' viewBox='0 0 42 10' fill='none' stroke='#1b293e'>
            <path d='M1 8h6' strokeWidth='2' />
            <path d='M18.500 3V.500h6v5H22M18 1h7' />
            <path d='M16.500 4.500h5v4h-5zM16 4.500h6' />
            <path d='M34 1l7 8M41 1l-7 8' strokeWidth='1.800' />
          </svg>
        </MdiButtons>
      </MenuBar>

      <Toolbars>
        <Strip $w={352} $gap={5}>
          <Grip />
          <Tool><NewIcon /></Tool>
          <Tool><OpenIcon /></Tool>
          <Tool><SaveIcon /></Tool>
          <Tool><SaveAllIcon /></Tool>
          <Divider />
          <Tool><PrintIcon /></Tool>
          <Tool><CutIcon /></Tool>
          <Tool><CopyIcon /></Tool>
          <Tool><PasteIcon /></Tool>
          <Tool><DeleteIcon /></Tool>
          <Divider />
          <Tool><UndoIcon /></Tool>
          <Divider />
          <Tool><BackIcon color='#008400' /></Tool>
          <Tool><BackIcon color='#858a93' flip /></Tool>
          <Divider />
          <Tool><InfoIcon /></Tool>
          <Tool><TableIcon /></Tool>
          <Overflow><OverflowMark /></Overflow>
        </Strip>
        <Strip $w={174} $gap={3}>
          <Grip />
          <Combo $w={98}>
            ENTEL
            <ComboArrow><Caret /></ComboArrow>
          </Combo>
          <Combo $w={53}>
            D
            <ComboArrow><Caret /></ComboArrow>
          </Combo>
          <Overflow><OverflowMark /></Overflow>
        </Strip>
        <Strip $w={174} $gap={2}>
          <Grip />
          <Tool><GearIcon /></Tool>
          <Tool><CubesIcon /></Tool>
          <Tool><GlassesIcon /></Tool>
          <Tool><ScrollIcon /></Tool>
          <Tool><HammerIcon /></Tool>
          <Tool><WandIcon /></Tool>
          <Tool><RunIcon /></Tool>
          <Overflow><OverflowMark /></Overflow>
        </Strip>
        <Strip $w={395} $gap={0}>
          <Grip />
          <Tool><PenIcon /></Tool>
          <TextTool $w={12}>
            <Caret />
          </TextTool>
          <Divider />
          <Tool><TrendIcon /></Tool>
          <Tool><HorizontalIcon /></Tool>
          <Tool><AbcIcon /></Tool>
          <TextTool $w={47}>
            Zoom
            <Caret />
          </TextTool>
          <Tool><EllipseIcon /></Tool>
          <Tool><RectIcon /></Tool>
          <Tool $on><DotLineIcon /></Tool>
          <Tool><MagnetIcon /></Tool>
          <Tool><ThickLineIcon /></Tool>
          <TextTool $w={67}>
            Fibonacci
            <Caret />
          </TextTool>
          <TextTool $w={44}>
            Gann
            <Caret />
          </TextTool>
          <Overflow><OverflowMark /></Overflow>
        </Strip>
      </Toolbars>

      <Body>
        <SideTabs>
          <SideTab $h={52}>Layouts</SideTab>
          <SideTab $h={46}>Charts</SideTab>
        </SideTabs>

        <Document>
          <TabRow>
            <DocTab>
              <svg width='14' height='14' viewBox='0 0 14 14'>
                <rect x='.500' y='.500' width='13' height='13' rx='1' fill='#e8f4fc' stroke='#7ab0dc' />
                <rect x='1' y='1' width='12' height='4' fill='#8ec5ee' />
                <path d='M1 13V9l2-2 2 2 2-3 2 2 2-3 2 2v6z' fill='#38a838' />
              </svg>
              ENTEL (Daily)
              <svg width='9' height='9' viewBox='0 0 9 9' stroke='#75633d' strokeWidth='1.500'>
                <path d='M1 1l7 7M8 1L1 8' />
              </svg>
            </DocTab>
            <svg width='26' height='12' viewBox='0 0 26 12' fill='none' stroke='#8793a8'>
              <path d='M11.500.500h3v3h4v4h-4v3h-3v-3h-4v-4h4z' />
            </svg>
            <TabArrows>
              <svg width='36' height='10' viewBox='0 0 36 10' fill='none' stroke='#ced4df'>
                <path d='M5.500 1v8l-4-4zM15.500 1v8l4-4z' />
                <path d='M27 5h8l-4 4z' fill='#ced4df' stroke='none' />
              </svg>
            </TabArrows>
          </TabRow>
          <ChartFrame>
            <Chart />
            <SheetBar>
              <SheetNav><NavMark flip end color='#6d6d6d' /></SheetNav>
              <SheetNav><NavMark flip color='#6d6d6d' /></SheetNav>
              <SheetNav><NavMark /></SheetNav>
              <SheetNav><NavMark end /></SheetNav>
              <Spacer />
              {SHEETS.map(([label, w, ls]) => (
                <Sheet key={label} $w={w} $ls={ls}>
                  <Slant left='#f0f0f0' right='#f0f0f0' />
                  <SheetLabel>{label}</SheetLabel>
                </Sheet>
              ))}
              <Sheet $w={57} $on>
                <Slant left='#f0f0f0' right='#000' />
                <SheetLabel>Sheet 8</SheetLabel>
              </Sheet>
              <svg width='10' height='17' viewBox='0 0 10 17'>
                <path d='M0 0h9L2 17H0z' fill='#000' />
                <path d='M9.500 0v17' stroke='#a0a0a0' />
              </svg>
              <SheetNav $w={17}>
                <svg width='9' height='9' viewBox='0 0 9 9' fill='none' stroke='#000'>
                  <path d='M2.500 4V1h3.500v1.500' strokeWidth='1.400' />
                  <path d='M0 4h8v5H0z' fill='#000' stroke='none' />
                  <path d='M3 6h2v1H3z' fill='#fff' stroke='none' />
                </svg>
              </SheetNav>
              <SheetNav $w={17}>▴S</SheetNav>
              <SheetNav $w={17}>▴I</SheetNav>
              <ScrollTrack>
                <svg width='4' height='7' viewBox='0 0 4 7'>
                  <path d='M4 0v7L0 3.500z' fill='#333' />
                </svg>
                <ScrollEnd>
                  <Thumb />
                  <svg width='4' height='7' viewBox='0 0 4 7'>
                    <path d='M0 0v7l4-3.500z' fill='#333' />
                  </svg>
                </ScrollEnd>
              </ScrollTrack>
            </SheetBar>
          </ChartFrame>
        </Document>

        <span />

        <Rail>
          <RailStrip $h={395}>
            <Grip $flat />
            <Tool $on><PointerIcon /></Tool>
            {DRAW_TOOLS.map((Glyph, i) => (
              <Tool key={i}><Glyph /></Tool>
            ))}
            <RailOverflow><RailMark /></RailOverflow>
          </RailStrip>
          <RailStrip $h={175}>
            <Grip $flat />
            <Tool><ZoomIcon color='#00ff00' plus /></Tool>
            <Tool><ZoomIcon color='#ffff00' /></Tool>
            <Tool><Interval $off>i</Interval></Tool>
            <Tool><Interval $off $small>h</Interval></Tool>
            <Tool $on><Interval>d</Interval></Tool>
            <Tool><Interval $small>w</Interval></Tool>
            <Tool><Interval $small>m</Interval></Tool>
            <RailOverflow><RailMark /></RailOverflow>
          </RailStrip>
          <RailStrip $h={88}>
            <Grip $flat />
            <Tool><LevelsIcon /></Tool>
            <Tool><ZonesIcon /></Tool>
            <Tool><FanIcon /></Tool>
            <RailOverflow>
              <MoreMark />
              <RailMark />
            </RailOverflow>
          </RailStrip>
        </Rail>
      </Body>

      <StatusBar>
        For Help, press F1
        <Spring />
        <StatusCell $w={18}>X:</StatusCell>
        <StatusCell $w={20}>Y:</StatusCell>
        <StatusCell $w={212}>NYSE, Group 255, Services, Advertising</StatusCell>
        <StatusCell $w={34}>Data</StatusCell>
        <StatusCell $w={50} />
        <StatusCell $w={51} $align='right'>1882M&nbsp;&nbsp;</StatusCell>
        <StatusCell $w={29} $last $align='right'>CAP</StatusCell>
      </StatusBar>

      <Taskbar>
        {TASKS.map(([gap, w, bg, color, iconWidth, round], i) => (
          <TaskSlot key={i} $gap={gap} $w={w} $bg={bg}>
            <TaskIcon $c={color} $w={iconWidth} $round={round} />
          </TaskSlot>
        ))}
        <Spring />
        <TaskSlot $w={15} $gap={0} $bg='#5f6e80' />
      </Taskbar>
    </Window>
  )
}

export default App
